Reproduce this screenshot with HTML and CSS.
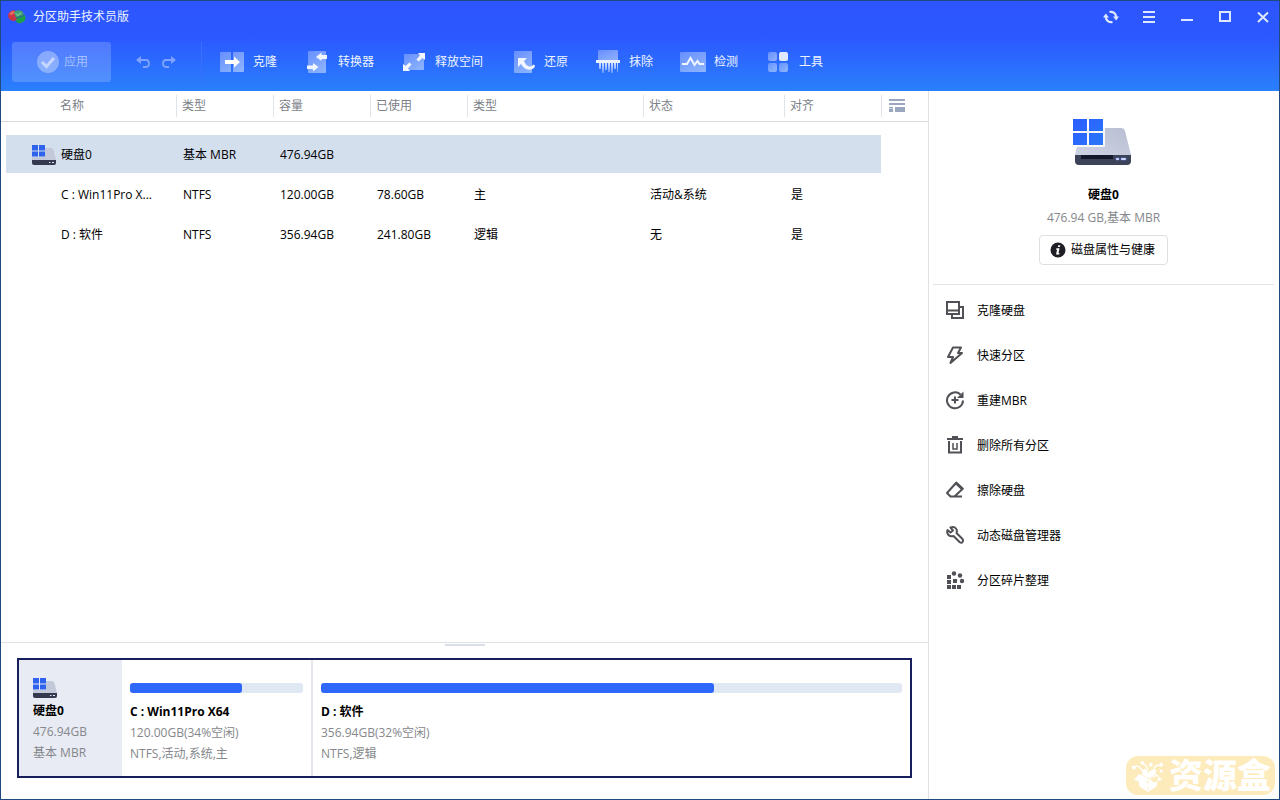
FILE: index.html
```html
<!DOCTYPE html>
<html lang="zh-CN">
<head>
<meta charset="utf-8">
<meta name="viewport" content="width=device-width, initial-scale=1">
<title>分区助手技术员版</title>
<link rel="stylesheet" href="styles.css">
</head>
<body>
<svg class="defs" aria-hidden="true">
  <defs>
    <linearGradient id="tile" x1="0" y1="0" x2="1" y2="1"><stop offset="0" stop-color="#2b5cff"/><stop offset="1" stop-color="#2a78fa"/></linearGradient>
    <linearGradient id="lid" x1="0" y1="1" x2="1" y2="0"><stop offset="0" stop-color="#cdd4e4"/><stop offset="1" stop-color="#b9bed2"/></linearGradient>
    <linearGradient id="fade" x1="0" y1="0" x2="1" y2="1"><stop offset="0" stop-color="#fff" stop-opacity=".28"/><stop offset="1" stop-color="#fff" stop-opacity=".48"/></linearGradient>
    <linearGradient id="drip" x1="0" y1="0" x2="0" y2="1"><stop offset="0" stop-color="#fff" stop-opacity=".8"/><stop offset="1" stop-color="#fff" stop-opacity=".25"/></linearGradient>
  </defs>
  <symbol id="drive" viewBox="0 0 60 48">
    <path d="M9 10H49Q52 10 53 13L59 37H3Z" fill="url(#lid)"/>
    <path d="M3 37H59V43Q59 47 55 47H7Q3 47 3 43Z" fill="#3c4258"/>
    <path d="M9 37H41V41H9Z" fill="#14182b"/>
    <path d="M44 40h3v2h-3zM49 40h5v2h-5z" fill="#fff" stroke="#5f7cf0" stroke-width=".6"/>
    <path d="M0 0H33V29H0Z" fill="#fff" fill-opacity=".85"/>
    <path d="M1 1H15V13H1ZM17 1H31V13H17ZM1 15H15V27H1ZM17 15H31V27H17Z" fill="url(#tile)"/>
  </symbol>
  <symbol id="drive-small" viewBox="0 0 26 22">
    <path d="M14 4H20Q22 4 22.500 6L25 16H1V13H14Z" fill="#c3c9d8"/>
    <path d="M1 16H25V19Q25 21 23 21H3Q1 21 1 19Z" fill="#343950"/>
    <path d="M18 18h1.500v1H18zM21 18h2v1h-2z" fill="#dfe7ff"/>
    <path d="M1 1H7V6.500H1ZM8 1H14V6.500H8ZM1 7.500H7V12.500H1ZM8 7.500H14V12.500H8Z" fill="#2f63ee"/>
  </symbol>
</svg>
<div class="app">
  <header class="header">
    <div class="titlebar">
      <svg class="logo" viewBox="0 0 18 16" aria-hidden="true">
        <path d="M0 6Q1 2 6 1L9 3V11L5 12Q0 11 0 6Z" fill="#c93545"/>
        <path d="M1 5Q3 2 6 2L8 4L3 6Z" fill="#e86c62"/>
        <path d="M6 3Q9 0 14 2Q16 4 16 7L8 9Z" fill="#3f9f70"/>
        <path d="M9 9L17 6Q19 12 13 14Q9 15 8 12Z" fill="#1fa247"/>
        <path d="M8 9L16 6.500" fill="none" stroke="#2b5f9a" stroke-width="1"/>
        <path d="M8 4.500L10 6.500L13 3.500" fill="none" stroke="#a9e6b8" stroke-width="1"/>
      </svg>
      <h1 class="title">分区助手技术员版</h1>
      <div class="window-controls">
        <button class="win-btn" type="button" aria-label="刷新"><svg viewBox="0 0 18 16"><path d="M7.500 3A5.300 5.300 0 0 1 14.200 8M10.500 13A5.300 5.300 0 0 1 3.800 8" fill="none" stroke="#dde8ff" stroke-width="2.200"/><path d="M11 7.500H17L14.200 11.500ZM1 8.500H7L3.800 4.500Z" fill="#dde8ff"/></svg></button>
        <button class="win-btn" type="button" aria-label="菜单"><svg viewBox="0 0 18 16"><path d="M3 3H15M3 8H15M3 13H15" stroke="#dde8ff" stroke-width="2"/></svg></button>
        <button class="win-btn" type="button" aria-label="最小化"><svg viewBox="0 0 18 16"><path d="M3 11H15" stroke="#dde8ff" stroke-width="2"/></svg></button>
        <button class="win-btn" type="button" aria-label="最大化"><svg viewBox="0 0 18 16"><path d="M4 3H14V12H4Z" fill="none" stroke="#dde8ff" stroke-width="2"/></svg></button>
        <button class="win-btn" type="button" aria-label="关闭"><svg viewBox="0 0 18 16"><path d="M4 3.500L14 13M14 3.500L4 13" stroke="#dde8ff" stroke-width="2"/></svg></button>
      </div>
    </div>
    <div class="toolbar">
      <button class="apply" type="button">
        <svg viewBox="0 0 22 22" aria-hidden="true"><circle cx="11" cy="11" r="11" fill="#fff" fill-opacity=".32"/><path d="M5 11L9.500 15.500L17 7" fill="none" stroke="#c6d7ff" stroke-width="3"/></svg>
        应用
      </button>
      <div class="history">
        <button class="step" type="button" aria-label="撤销"><svg viewBox="0 0 16 14"><path d="M3 5H11Q14 5 14 8.500T11 12H8" fill="none" stroke="currentColor" stroke-width="1.800"/><path d="M6 1V9L1 5Z" fill="currentColor"/></svg></button>
        <button class="step" type="button" aria-label="重做"><svg viewBox="0 0 16 14"><path d="M13 5H5Q2 5 2 8.500T5 12H8" fill="none" stroke="currentColor" stroke-width="1.800"/><path d="M10 1V9L15 5Z" fill="currentColor"/></svg></button>
      </div>
      <nav class="tools">
        <button class="tool" type="button"><svg viewBox="0 0 26 26"><path d="M1 4Q1 3 2 3H12V23H2Q1 23 1 22ZM14 3H24Q25 3 25 4V22Q25 23 24 23H14Z" fill="url(#fade)"/><path d="M6 11H15V7.500L21 13L15 18.500V15H6Z" fill="#fff"/></svg>克隆</button>
        <button class="tool" type="button"><svg viewBox="0 0 26 26"><rect x="4" y="2" width="18" height="22" rx="1" fill="url(#fade)"/><path d="M23 6H17.500V3.500L12 8L17.500 12V10H23ZM3 16.500H9V14L14.500 18L9 22.500V20H3Z" fill="#f2f7ff"/></svg>转换器</button>
        <button class="tool" type="button"><svg viewBox="0 0 26 26"><rect x="3" y="5" width="20" height="16" rx="1" fill="url(#fade)"/><path d="M17 4H24V11L21.500 9L17.500 12.500L15.500 10.500L19 6.500ZM9 22H2V15L4.500 17L8.500 13.500L10.500 15.500L7 19.500Z" fill="#f2f7ff"/></svg>释放空间</button>
        <button class="tool" type="button"><svg viewBox="0 0 26 26"><rect x="4" y="2" width="18" height="22" rx="1" fill="url(#fade)"/><path d="M8 9H17L14 12Q16 16.500 19 17.500Q22 18 23.500 15.500Q26 16.500 24 19Q20.500 22 16 20Q12.500 18 11 15L8 18Z" fill="#f2f7ff"/></svg>还原</button>
        <button class="tool" type="button"><svg viewBox="0 0 26 26"><rect x="3" y="1" width="20" height="10" rx="1" fill="url(#fade)"/><path d="M4 14H6V20H4ZM7 14H9V24H7ZM10 14H12V21H10ZM13 14H15V23H13ZM16 14H18V24H16ZM19 14H21V20H19ZM22 14H23V23H22Z" fill="url(#drip)"/><path d="M1 11H25V14H1Z" fill="#eaf2ff"/></svg>抹除</button>
        <button class="tool" type="button"><svg viewBox="0 0 26 26"><rect x="0" y="3" width="26" height="20" rx="1" fill="url(#fade)"/><path d="M2 15H7L10.500 9L14.500 16L17.500 12L19.500 15H24" fill="none" stroke="#f2f7ff" stroke-width="2"/></svg>检测</button>
        <button class="tool" type="button"><svg viewBox="0 0 26 26"><rect x="3" y="3" width="9" height="9" rx="2" fill="url(#fade)"/><rect x="14" y="3" width="9" height="9" rx="2" fill="#dfe9ff"/><rect x="3" y="14" width="9" height="9" rx="2" fill="url(#fade)"/><rect x="14" y="14" width="9" height="9" rx="2" fill="url(#fade)"/></svg>工具</button>
      </nav>
    </div>
  </header>
  <div class="body">
    <main class="main">
      <div class="list">
        <table class="volumes">
          <colgroup><col class="c-name"><col class="c-std"><col class="c-std"><col class="c-std"><col class="c-type"><col class="c-state"><col class="c-std"><col class="c-menu"></colgroup>
          <thead>
            <tr><th>名称</th><th>类型</th><th>容量</th><th>已使用</th><th>类型</th><th>状态</th><th>对齐</th>
              <th><button class="columns" type="button" aria-label="列设置"><svg viewBox="0 0 16 13"><path d="M0 0H16V2H0ZM0 4H16V6H0ZM0 8H4V9.500H0ZM0 10H4V13H0ZM6 8H16V13H6Z" fill="#9aa7bf"/></svg></button></th></tr>
          </thead>
          <tbody>
            <tr class="selected"><td><span class="disk-name"><svg viewBox="0 0 26 22" aria-hidden="true"><use href="#drive-small"/></svg>硬盘0</span></td><td>基本 MBR</td><td>476.94GB</td><td></td><td></td><td></td><td></td><td></td></tr>
            <tr><td>C : Win11Pro X...</td><td>NTFS</td><td>120.00GB</td><td>78.60GB</td><td>主</td><td>活动&amp;系统</td><td>是</td><td></td></tr>
            <tr><td>D : 软件</td><td>NTFS</td><td>356.94GB</td><td>241.80GB</td><td>逻辑</td><td>无</td><td>是</td><td></td></tr>
          </tbody>
        </table>
      </div>
      <section class="map">
        <div class="grip"></div>
        <div class="disk">
          <div class="disk-info">
            <svg viewBox="0 0 26 22" aria-hidden="true"><use href="#drive-small"/></svg>
            <strong>硬盘0</strong><span>476.94GB</span><span>基本 MBR</span>
          </div>
          <div class="part part-c">
            <div class="bar"><div class="fill" style="width:65%"></div></div>
            <strong>C : Win11Pro X64</strong><span>120.00GB(34%空闲)</span><span>NTFS,活动,系统,主</span>
          </div>
          <div class="part part-d">
            <div class="bar"><div class="fill" style="width:67.6%"></div></div>
            <strong>D : 软件</strong><span>356.94GB(32%空闲)</span><span>NTFS,逻辑</span>
          </div>
        </div>
      </section>
    </main>
    <aside class="side">
      <div class="summary">
        <svg class="drive" viewBox="0 0 60 48" aria-hidden="true"><use href="#drive"/></svg>
        <h2>硬盘0</h2>
        <p>476.94 GB,基本 MBR</p>
        <button class="health" type="button"><svg viewBox="0 0 16 16" aria-hidden="true"><circle cx="8" cy="8" r="7.500" fill="#1e1e24"/><path d="M8.300 3.200H10.300L9.900 5H7.900ZM6.400 6.300H9.500L8.500 11H9.500L9.200 12.500H6L7.100 7.700H6.100Z" fill="#fff"/></svg>磁盘属性与健康</button>
      </div>
      <div class="actions">
        <button type="button"><svg viewBox="0 0 20 20"><path d="M2 2H14V14H2ZM2 10.500H14M15 7H18V18H7V15"/></svg>克隆硬盘</button>
        <button type="button"><svg viewBox="0 0 20 20"><path d="M8 2.500H16L13 8H17L5.500 18L8 12H3Z" stroke-linejoin="round"/></svg>快速分区</button>
        <button type="button"><svg viewBox="0 0 20 20"><path d="M15.500 4.500A8 8 0 1 0 18 10.500M6.500 10H13.500M10 6.500V13.500"/><path d="M18.500 1.500V8H12Z" class="solid"/></svg>重建MBR</button>
        <button type="button"><svg viewBox="0 0 20 20"><path d="M2 4H18M7 2H13M4 6V17.500H16V6"/><path d="M8 8V14H12V8" stroke-width="1.500"/></svg>删除所有分区</button>
        <button type="button"><svg viewBox="0 0 20 20"><path d="M11 3L17.500 9L9.500 16.500H5.500L2 13ZM9 16.500H17" stroke-linejoin="round"/><path d="M11.500 1.500L19 8.500L17 10.500L9.500 3.500Z" class="solid"/></svg>擦除硬盘</button>
        <button type="button"><svg viewBox="0 0 20 20"><path d="M2.500 5L5.500 7.500L8 5.500L5.500 2.500Q9 1 11 3.500Q12.500 5.500 11.500 8L17.500 14Q18.500 15.500 17.500 17T14.500 17L8.500 11Q5.500 12 3.500 10T2.500 5Z" stroke-linejoin="round"/></svg>动态磁盘管理器</button>
        <button type="button"><svg viewBox="0 0 20 20"><path class="solid" d="M2 5h4v4H2zM2 10h4v4H2zM2 15h4v4H2zM8 9h4v4H8zM7 15h4v4H7zM12 15h4v4h-4z"/><circle class="solid" cx="9" cy="3.500" r="2.200"/><circle class="solid" cx="15" cy="5.500" r="2.200"/><circle class="solid" cx="17" cy="11" r="2.200"/></svg>分区碎片整理</button>
      </div>
    </aside>
  </div>
  <div class="brand">
    <svg viewBox="0 0 36 36" aria-hidden="true">
      <path d="M7 18L18 21L29 18L27 29L18 35L9 29ZM3 22L9 16L17 20L12 25ZM33 22L27 16L19 20L24 25ZM12 11Q17 9 18 15Q22 9 27 12L25 18L18 20L12 17Z" fill="#fff"/>
      <path d="M12 13Q9 6 4 8M18 12Q17 7 13 5M24 12Q25 5 32 7" fill="none" stroke="#fff" stroke-width="1.500"/>
      <circle cx="3" cy="9" r="2" fill="#fff"/><circle cx="12" cy="4" r="2" fill="#fff"/><circle cx="21" cy="6" r="2" fill="#fff"/><circle cx="32" cy="6" r="2" fill="#fff"/><circle cx="32" cy="13" r="1.500" fill="#fff"/>
      <path d="M18 22V26M18 30V33" fill="none" stroke="#fdebbb" stroke-width="1"/>
    </svg>
    <span>资源盒</span>
  </div>
</div>
</body>
</html>
```
FILE: styles.css
```css
* { box-sizing: border-box; }
body {
  margin: 0;
  font: 12px/20px "Open Sans", "Noto Sans CJK SC", sans-serif;
  color: #000;
  background: #fff;
}
button {
  padding: 0;
  border: 0;
  background: none;
  color: inherit;
  font: inherit;
  cursor: pointer;
}
svg { display: block; flex: none; }
.defs { position: absolute; width: 0; height: 0; }

.app {
  position: relative;
  display: flex;
  flex-direction: column;
  min-height: 100vh;
  border: 1px solid #1f4a80;
}

.header {
  background: linear-gradient(#2d55ff, #2c58ff 40%, #2a80fc);
  color: #eef4ff;
}
.titlebar {
  display: flex;
  align-items: center;
  height: 31px;
  padding: 0 2px 0 7px;
}
.logo { width: 18px; height: 16px; }
.title { margin: 0 0 0 7px; font-size: 12px; font-weight: 400; }
.window-controls { display: flex; gap: 10px; margin-left: auto; }
.win-btn { display: grid; place-items: center; width: 28px; height: 28px; }
.win-btn svg { width: 18px; height: 16px; }

.toolbar {
  display: flex;
  align-items: center;
  height: 59px;
  padding-left: 11px;
}
.apply {
  display: flex;
  align-items: center;
  justify-content: center;
  gap: 5px;
  width: 99px;
  height: 40px;
  padding-left: 2px;
  border-radius: 3px;
  background: rgba(255, 255, 255, .18);
  color: #a9c2ff;
}
.apply svg { width: 22px; height: 22px; }
.history {
  display: flex;
  align-items: center;
  gap: 10px;
  height: 40px;
  padding: 0 24px;
  border-right: 1px solid #3b70ff;
  color: #7fa2ff;
}
.step svg { width: 16px; height: 14px; }
.tools { display: flex; gap: 27px; padding-left: 17px; }
.tool { display: flex; align-items: center; gap: 8px; white-space: nowrap; }
.tool svg { width: 26px; height: 26px; }

.body { display: flex; flex: 1; }
.main { display: flex; flex: 1; flex-direction: column; min-width: 0; }
.list { flex: 1; }

.volumes {
  width: 100%;
  table-layout: fixed;
  border-collapse: separate;
  border-spacing: 0;
}
.c-name { width: 175px; }
.c-std { width: 97px; }
.c-type { width: 176px; }
.c-state { width: 141px; }
.c-menu { width: 47px; }
.volumes th {
  height: 31px;
  padding: 0 0 0 6px;
  border-bottom: 1px solid #d9d9dc;
  background: linear-gradient(#dfe3ea, #dfe3ea) 0 4px / 1px 22px no-repeat;
  color: #7c7f88;
  font-weight: 400;
  text-align: left;
}
.volumes th:first-child { padding-left: 59px; background: none; }
.volumes th:last-child { padding: 0 0 1px 8px; }
.columns { display: block; }
.columns svg { width: 16px; height: 13px; }
.volumes tbody::before { content: ""; display: block; height: 12px; }
.volumes td {
  height: 40px;
  padding: 2px 0 0 7px;
  border: solid transparent;
  border-width: 1px 0;
  background-clip: padding-box;
  white-space: nowrap;
}
.volumes td:first-child { padding-left: 55px; border-left-width: 5px; }
.selected td:not(:last-child) { background-color: #d4dfee; }
.volumes .selected td:first-child { padding-left: 25px; }
.disk-name { display: flex; align-items: center; gap: 4px; }
.disk-name svg, .disk-info svg { width: 26px; height: 22px; }

.map { border-top: 1px solid #e0e1e5; padding: 1px 16px 21px; }
.grip { width: 40px; height: 2px; margin: 0 auto 12px; background: #d8dfe9; }
.disk {
  display: flex;
  min-height: 120px;
  border: 2px solid #17205c;
  line-height: 21px;
}
.disk span { color: #85878c; }
.disk strong, .disk span { display: block; white-space: nowrap; }
.disk-info { width: 103px; padding: 17px 0 0 14px; background: #e8ebf3; }
.disk-info svg { margin: 0 0 1px -1px; }
.part { min-width: 0; padding: 23px 8px 0; overflow: hidden; }
.part-c { flex: 120 1 0; border-right: 2px solid #e4e7ed; }
.part-d { flex: 403 1 0; }
.bar {
  height: 10px;
  margin-bottom: 8px;
  border-radius: 3px;
  background: #dfe8f3;
}
.fill { height: 10px; border-radius: 3px; background: #2d68fb; }

.side { width: 351px; padding: 0 5px 0 4px; border-left: 1px solid #dfe1e6; }
.summary {
  display: flex;
  flex-direction: column;
  align-items: center;
  padding: 27px 0 19px;
  border-bottom: 1px solid #e2e3e7;
}
.drive { width: 60px; height: 48px; margin-right: 3px; }
.summary h2 { margin: 18px 0 0; font-size: 12px; line-height: 22px; }
.summary p { margin: 0; line-height: 24px; color: #85878c; }
.health {
  display: flex;
  align-items: center;
  gap: 5px;
  height: 30px;
  margin-top: 5px;
  padding: 0 12px 0 10px;
  border: 1px solid #dddfe4;
  border-radius: 4px;
}
.health svg { width: 16px; height: 16px; }
.actions { display: flex; flex-direction: column; padding: 3px 0 0 12px; }
.actions button { display: flex; align-items: center; gap: 12px; height: 45px; }
.actions svg {
  width: 20px;
  height: 20px;
  margin-bottom: 2px;
  fill: none;
  stroke: #505156;
  stroke-width: 2;
}
.actions .solid { fill: #505156; stroke: none; }

.brand {
  position: absolute;
  right: 4px;
  bottom: 4px;
  display: flex;
  align-items: center;
  gap: 4px;
  height: 39px;
  padding: 0 4px 0 5px;
  border-radius: 12px;
  background: #fdebbb;
  color: #fff;
  font: 900 34px/38px "Noto Sans CJK SC", sans-serif;
}
.brand svg { width: 34px; height: 34px; }
.brand span { height: 42px; }
```
